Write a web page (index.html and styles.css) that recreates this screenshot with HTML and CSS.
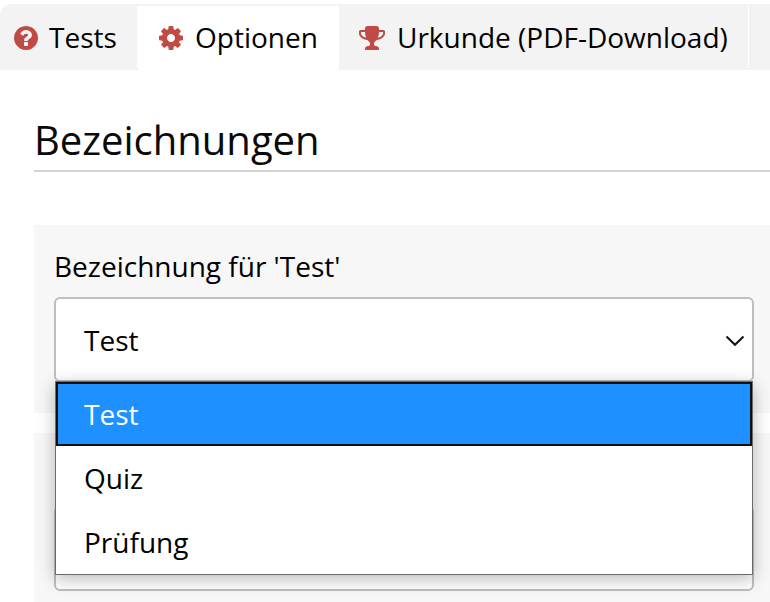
FILE: index.html
```html
<!DOCTYPE html>
<html lang="de">
<head>
<meta charset="utf-8">
<title>Bezeichnungen</title>
<link rel="stylesheet" href="styles.css">
</head>
<body>
<nav class="tabs">
  <a class="tab tab-tests"><svg class="icon" viewBox="0 0 1792 1792"><path d="M1024 1376v-192q0-14-9-23t-23-9h-192q-14 0-23 9t-9 23v192q0 14 9 23t23 9h192q14 0 23-9t9-23zm256-672q0-88-55.5-163t-138.5-116-170-41q-243 0-371 213-15 24 8 42l132 100q7 6 19 6 16 0 25-12 53-68 86-92 34-24 86-24 48 0 85.5 26t37.5 59q0 38-20 61t-68 45q-63 28-115.5 86.5t-52.5 125.5v36q0 14 9 23t23 9h192q14 0 23-9t9-23q0-19 21.5-49.5t54.5-49.5q32-18 49-28.5t46-35 44.5-48 28-60.5 12.5-81zm384 192q0 209-103 385.5t-279.5 279.5-385.5 103-385.5-103-279.5-279.5-103-385.5 103-385.5 279.5-279.5 385.5-103 385.5 103 279.5 279.5 103 385.5z"/></svg><span>Tests</span></a>
  <a class="tab tab-options active"><svg class="icon" viewBox="0 0 1792 1792"><path d="M1152 896q0-106-75-181t-181-75-181 75-75 181 75 181 181 75 181-75 75-181zm512-109v222q0 12-8 23t-20 13l-185 28q-19 54-39 91 35 50 107 138 10 12 10 25t-9 23q-27 37-99 108t-94 71q-12 0-26-9l-138-108q-44 23-91 38-16 136-29 186-7 28-36 28h-222q-14 0-24.5-8.5t-11.5-21.5l-28-184q-49-16-90-37l-141 107q-10 9-25 9-14 0-25-11-126-114-165-168-7-10-7-23 0-12 8-23 15-21 51-66.5t54-70.5q-27-50-41-99l-183-27q-13-2-21-12.5t-8-23.5v-222q0-12 8-23t19-13l186-28q14-46 39-92-40-57-107-138-10-12-10-24 0-10 9-23 26-36 98.5-107.5t94.5-71.5q13 0 26 10l138 107q44-23 91-38 16-136 29-186 7-28 36-28h222q14 0 24.5 8.5t11.5 21.5l28 184q49 16 90 37l142-107q9-9 24-9 13 0 25 10 129 119 165 170 7 8 7 22 0 12-8 23-15 21-51 66.5t-54 70.5q26 50 41 98l183 28q13 2 21 12.5t8 23.5z"/></svg><span>Optionen</span></a>
  <a class="tab tab-certificate"><svg class="icon" viewBox="0 0 1792 1792"><path d="M522 883q-74-162-74-371h-256v96q0 78 94.5 162t235.5 113zm1078-275v-96h-256q0 209-74 371 141-29 235.5-113t94.5-162zm128-128v128q0 71-41.5 143t-112 130-173 97.5-215.5 44.5q-42 54-95 95-38 34-52.5 72.5t-14.5 89.5q0 54 30.5 91t97.5 37q75 0 133.5 45.5t58.5 114.5v64q0 14-9 23t-23 9h-832q-14 0-23-9t-9-23v-64q0-69 58.5-114.5t133.5-45.5q67 0 97.5-37t30.5-91q0-51-14.5-89.5t-52.5-72.5q-53-41-95-95-113-5-215.5-44.5t-173-97.5-112-130-41.5-143v-128q0-40 28-68t68-28h288v-96q0-66 47-113t113-47h576q66 0 113 47t47 113v96h288q40 0 68 28t28 68z"/></svg><span>Urkunde (PDF-Download)</span></a>
</nav>
<main class="content">
  <h1 class="title">Bezeichnungen</h1>
  <section class="card">
    <div class="label">Bezeichnung für 'Test'</div>
    <div class="field">
      <div class="select"><span>Test</span><svg class="chevron" viewBox="0 0 20 12"><path d="M1.5 1.5 10 9.8 18.5 1.5"/></svg></div>
      <div class="menu">
        <div class="option selected">Test</div>
        <div class="option">Quiz</div>
        <div class="option">Prüfung</div>
      </div>
    </div>
  </section>
  <section class="card card-next">
    <div class="select"></div>
  </section>
</main>
</body>
</html>
```
FILE: styles.css
```css
* { box-sizing: border-box; }
body {
  margin: 0;
  padding-top: 4px;
  background: #fff;
  color: #000;
  font: 28px/38px "Open Sans", sans-serif;
}
.tabs {
  display: flex;
  height: 66px;
  padding: 2px 0;
  background: #f3f3f3;
  border-top-left-radius: 12px;
}
.tab {
  display: flex;
  align-items: center;
  height: 62px;
  border-right: 1px solid #fff;
  white-space: nowrap;
  flex: none;
}
.icon { width: 28px; height: 28px; flex: none; fill: #c04b45; margin: 1px 9px 0 0; }
.tab-tests { width: 138px; padding-left: 12px; }
.tab-options { width: 201px; padding-left: 19px; }
.tab-certificate { width: 410px; padding-left: 19px; }
.tab-options .icon { margin-right: 10px; }
.tab-certificate .icon { margin-right: 11px; }
.active { background: #fff; height: 64px; padding-bottom: 2px; }
.content { padding-left: 34px; }
.title {
  margin: 43px 0 53px;
  height: 59px;
  border-bottom: 2px solid #d3d3d3;
  font-size: 40px;
  line-height: 54px;
  font-weight: 400;
  color: #0a0a0a;
}
.card {
  height: 188px;
  margin-bottom: 20px;
  padding: 22px 0 0 20px;
  background: #f7f7f7;
}
.label { height: 50px; }
.field { position: relative; width: 700px; }
.select {
  display: flex;
  align-items: center;
  justify-content: space-between;
  width: 700px;
  height: 85px;
  padding: 0 7px 0 28px;
  border: 2px solid #bebebe;
  border-radius: 6px;
  background: #fff;
}
.chevron { width: 20px; height: 12px; margin-top: 2px; fill: none; stroke: #101010; stroke-width: 2; }
.menu {
  position: absolute;
  z-index: 1;
  top: 84px;
  left: 1px;
  width: 698px;
  border: 1px solid #6b6b6b;
  background: #fff;
  box-shadow: 0 4px 16px rgba(0, 0, 0, .28);
}
.option { height: 64px; padding-left: 28px; line-height: 64px; }
.selected {
  background: #1e90ff;
  color: #fff;
  outline: 2px solid #101010;
  outline-offset: -2px;
}
.card-next { height: 169px; margin-bottom: 0; padding-top: 73px; }
```
